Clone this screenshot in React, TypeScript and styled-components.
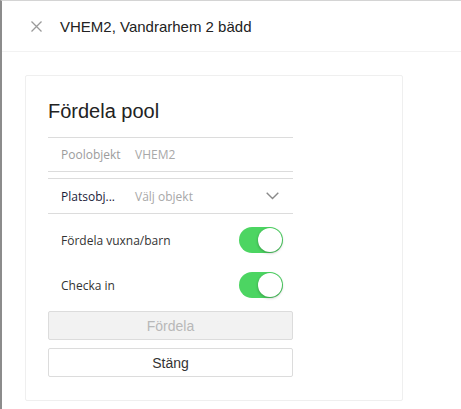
import React from "react";
import styled, { createGlobalStyle } from "styled-components";

const Global = createGlobalStyle`
  html, body { margin: 0; padding: 0; background: #fff; }
  * { box-sizing: border-box; }
`;

const Page = styled.div`
  height: 409px;
  border-left: 2px solid #8c8c8c;
  border-top: 1px solid #d4d4d4;
  background: #fff;
  font-family: "Liberation Sans", Arial, sans-serif;
`;

const Header = styled.header`
  height: 51px;
  display: flex;
  align-items: center;
  gap: 18px;
  padding-left: 29px;
  border-bottom: 1px solid #f2f2f2;
`;

const CloseIcon = styled.svg`
  width: 11px;
  height: 11px;
  flex: none;
`;

const HeaderTitle = styled.h1`
  margin: 0;
  font-size: 15px;
  font-weight: normal;
  color: #222;
`;

const Body = styled.main`
  padding: 23px 0 0 23px;
`;

const Card = styled.section`
  width: 378px;
  height: 326px;
  border: 1px solid #efefef;
  border-radius: 2px;
  padding: 24px 0 0 22px;
`;

const Content = styled.div`
  width: 245px;
  display: flex;
  flex-direction: column;
`;

const CardTitle = styled.h2`
  margin: 0 0 14px 0;
  font-size: 20px;
  line-height: 23px;
  font-weight: normal;
  color: #222;
`;

const Field = styled.div<{ $gap?: number }>`
  height: ${(p) => (p.$gap ? 36 : 35)}px;
  margin-top: ${(p) => p.$gap ?? 0}px;
  display: flex;
  align-items: center;
  padding: 0 14px 0 13px;
  border-top: 1px solid #dcdcdc;
  border-bottom: 1px solid #dcdcdc;
  font-family: "Open Sans", sans-serif;
  font-size: 12px;
`;

const FieldLabel = styled.span<{ $active?: boolean }>`
  width: 74px;
  flex: none;
  color: ${(p) => (p.$active ? "#1c1c3a" : "#9c9c9c")};
  white-space: nowrap;
`;

const FieldValue = styled.span`
  flex: 1;
  color: #a8a8a8;
`;

const Chevron = styled.svg`
  width: 13px;
  height: 8px;
  flex: none;
`;

const Toggles = styled.div`
  display: flex;
  flex-direction: column;
  gap: 19px;
  padding-top: 13px;
`;

const ToggleRow = styled.div`
  height: 26px;
  display: flex;
  align-items: center;
  justify-content: space-between;
  padding: 0 10px 0 13px;
  font-family: "Open Sans", sans-serif;
  font-size: 12px;
  color: #333;
`;

const Switch = styled.div<{ $on: boolean }>`
  position: relative;
  width: 44px;
  height: 26px;
  border-radius: 13px;
  background: ${(p) => (p.$on ? "#4cd562" : "#ddd")};
`;

const Knob = styled.div<{ $on: boolean }>`
  position: absolute;
  top: 1px;
  left: ${(p) => (p.$on ? 19 : 1)}px;
  width: 24px;
  height: 24px;
  border-radius: 50%;
  background: #fff;
  box-shadow: 0 1px 3px rgba(0, 0, 0, 0.3);
`;

const Buttons = styled.div`
  display: flex;
  flex-direction: column;
  gap: 8px;
  margin-top: 13px;
`;

const Button = styled.button<{ $disabled?: boolean }>`
  height: 29px;
  width: 100%;
  border: 1px solid #dcdcdc;
  border-radius: 2px;
  background: ${(p) => (p.$disabled ? "#f2f2f2" : "#fff")};
  color: ${(p) => (p.$disabled ? "#b8b8b8" : "#333")};
  font-family: "Liberation Sans", Arial, sans-serif;
  font-size: 14px;
  padding: 0;
`;

export default function App() {
  return (
    <>
      <Global />
      <Page>
        <Header>
          <CloseIcon viewBox="0 0 11 11">
            <path d="M0.5 0.5 L10.5 10.5 M10.5 0.5 L0.5 10.5" stroke="#9a9a9a" strokeWidth="1.3" fill="none" />
          </CloseIcon>
          <HeaderTitle>VHEM2, Vandrarhem 2 bädd</HeaderTitle>
        </Header>
        <Body>
          <Card>
            <Content>
              <CardTitle>Fördela pool</CardTitle>
              <Field>
                <FieldLabel>Poolobjekt</FieldLabel>
                <FieldValue>VHEM2</FieldValue>
              </Field>
              <Field $gap={6}>
                <FieldLabel $active>Platsobj...</FieldLabel>
                <FieldValue>Välj objekt</FieldValue>
                <Chevron viewBox="0 0 13 8">
                  <path d="M0.7 0.7 L6.5 6.5 L12.3 0.7" stroke="#8a8a8a" strokeWidth="1.4" fill="none" />
                </Chevron>
              </Field>
              <Toggles>
                <ToggleRow>
                  <span>Fördela vuxna/barn</span>
                  <Switch $on>
                    <Knob $on />
                  </Switch>
                </ToggleRow>
                <ToggleRow>
                  <span>Checka in</span>
                  <Switch $on>
                    <Knob $on />
                  </Switch>
                </ToggleRow>
              </Toggles>
              <Buttons>
                <Button $disabled>Fördela</Button>
                <Button>Stäng</Button>
              </Buttons>
            </Content>
          </Card>
        </Body>
      </Page>
    </>
  );
}
